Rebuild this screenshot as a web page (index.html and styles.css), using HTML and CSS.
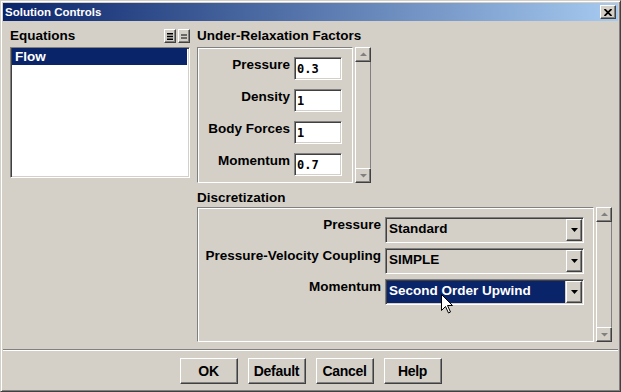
FILE: index.html
```html
<!DOCTYPE html>
<html lang="en">
<head>
  <meta charset="UTF-8">
  <title>Solution Controls</title>
  <link rel="stylesheet" href="styles.css">
</head>
<body>

  <div class="window">
    <div class="titlebar">
      <span class="title">Solution Controls</span>
      <div class="close-btn">
        <svg width="8" height="7" viewBox="0 0 8 7">
          <path d="M0.5 0 L7.5 7 M7.5 0 L0.5 7" stroke="#000" stroke-width="1.8" fill="none"/>
        </svg>
      </div>
    </div>

    <div class="main">
      <div class="group">
        <div class="group-head">
          <span class="group-label">Equations</span>
          <div class="mini-btns">
            <div class="mini-btn">
              <svg width="6" height="7" viewBox="0 0 6 7">
                <rect x="0" y="0" width="6" height="1.5" fill="#000"/>
                <rect x="0" y="2.75" width="6" height="1.5" fill="#000"/>
                <rect x="0" y="5.5" width="6" height="1.5" fill="#000"/>
              </svg>
            </div>
            <div class="mini-btn">
              <svg width="6" height="7" viewBox="0 0 6 7">
                <rect x="0" y="1.5" width="6" height="1" fill="#000"/>
                <rect x="0" y="4.5" width="6" height="1" fill="#000"/>
              </svg>
            </div>
          </div>
        </div>
        <ul class="listbox">
          <li class="selected">Flow</li>
        </ul>
      </div>

      <div class="group">
        <div class="group-head">
          <span class="group-label">Under-Relaxation Factors</span>
        </div>
        <div class="panel-row">
          <div class="panel relax">
            <div class="field-row"><label>Pressure</label><input type="text" value="0.3"></div>
            <div class="field-row"><label>Density</label><input type="text" value="1"></div>
            <div class="field-row"><label>Body Forces</label><input type="text" value="1"></div>
            <div class="field-row"><label>Momentum</label><input type="text" value="0.7"></div>
          </div>
          <div class="scrollbar">
            <div class="sb-btn">
              <svg width="7" height="5" viewBox="0 0 7 5"><polygon points="0,4 3.5,0.5 7,4" fill="#808080"/></svg>
            </div>
            <div class="sb-track"></div>
            <div class="sb-btn">
              <svg width="7" height="5" viewBox="0 0 7 5"><polygon points="0,1 3.5,4.5 7,1" fill="#808080"/></svg>
            </div>
          </div>
        </div>
      </div>

      <div class="group discret">
        <div class="group-head short">
          <span class="group-label">Discretization</span>
        </div>
        <div class="panel-row">
          <div class="panel schemes">
            <div class="field-row">
              <label>Pressure</label>
              <div class="select">
                <span class="value">Standard</span>
                <span class="arrow-btn"><svg width="7" height="4" viewBox="0 0 7 4"><polygon points="0,0 7,0 3.5,4" fill="#000"/></svg></span>
              </div>
            </div>
            <div class="field-row">
              <label>Pressure-Velocity Coupling</label>
              <div class="select">
                <span class="value">SIMPLE</span>
                <span class="arrow-btn"><svg width="7" height="4" viewBox="0 0 7 4"><polygon points="0,0 7,0 3.5,4" fill="#000"/></svg></span>
              </div>
            </div>
            <div class="field-row">
              <label>Momentum</label>
              <div class="select active">
                <span class="value">Second Order Upwind</span>
                <span class="arrow-btn"><svg width="7" height="4" viewBox="0 0 7 4"><polygon points="0,0 7,0 3.5,4" fill="#000"/></svg></span>
              </div>
            </div>
          </div>
          <div class="scrollbar">
            <div class="sb-btn">
              <svg width="7" height="5" viewBox="0 0 7 5"><polygon points="0,4 3.5,0.5 7,4" fill="#808080"/></svg>
            </div>
            <div class="sb-track"></div>
            <div class="sb-btn">
              <svg width="7" height="5" viewBox="0 0 7 5"><polygon points="0,1 3.5,4.5 7,1" fill="#808080"/></svg>
            </div>
          </div>
        </div>
      </div>
    </div>

    <div class="separator"></div>

    <div class="buttons">
      <button>OK</button>
      <button>Default</button>
      <button>Cancel</button>
      <button>Help</button>
    </div>

    <svg class="cursor" width="12" height="20" viewBox="0 0 12 20">
      <path d="M0.5 0.5 V16.5 L4.5 12.5 L7.5 19 L9.5 18 L6.5 11.5 H11.5 Z" fill="#fff" stroke="#000" stroke-width="1"/>
    </svg>
  </div>

</body>
</html>
```

FILE: styles.css
```css
* {
  box-sizing: border-box;
}

body {
  margin: 0;
  background: #d4d0c8;
  font-family: 'Liberation Sans', Arial, sans-serif;
  font-size: 13.5px;
  font-weight: bold;
  color: #000;
}

.window {
  position: relative;
  width: 621px;
  height: 392px;
  background: #d4d0c8;
  border: 1px solid;
  border-color: #d4d0c8 #404040 #404040 #d4d0c8;
  box-shadow: inset 1px 1px 0 #fff, inset -1px -1px 0 #808080;
  padding: 2px;
}

/* title bar */

.titlebar {
  height: 18px;
  display: flex;
  align-items: center;
  justify-content: space-between;
  padding: 0 2px;
  background: linear-gradient(to right, #0a246a, #a6caf0);
}

.title {
  color: #fff;
  font-size: 11.5px;
}

.close-btn,
.mini-btn,
.sb-btn,
.arrow-btn,
button {
  background: #d4d0c8;
  border: 1px solid;
  border-color: #fff #404040 #404040 #fff;
  box-shadow: inset -1px -1px 0 #808080;
}

.close-btn {
  width: 16px;
  height: 14px;
  display: flex;
  align-items: center;
  justify-content: center;
}

/* layout */

.main {
  display: grid;
  grid-template-columns: 180px 1fr;
  column-gap: 7px;
  padding: 5px 6px 0 7px;
}

.group-head {
  height: 21px;
  line-height: 20px;
  display: flex;
  justify-content: space-between;
  align-items: flex-start;
}

.group-head.short {
  height: 19px;
}

.discret {
  grid-column: 2;
  margin-top: 5px;
}

.mini-btns {
  display: flex;
  gap: 2px;
  margin-top: 3px;
}

.mini-btn {
  width: 12px;
  height: 14px;
  display: flex;
  align-items: center;
  justify-content: center;
}

/* equations list */

.listbox {
  list-style: none;
  margin: 0;
  height: 131px;
  background: #fff;
  border: 1px solid;
  border-color: #808080 #fff #fff #808080;
  box-shadow: inset 1px 1px 0 #404040, inset -1px -1px 0 #d4d0c8;
  padding: 0 2px 1px 1px;
}

.listbox li {
  height: 17px;
  line-height: 17px;
  padding-left: 3px;
}

.listbox li.selected {
  background: #0a246a;
  color: #fff;
}

/* panels */

.panel-row {
  display: flex;
}

.panel {
  border: 1px solid;
  border-color: #808080 #fff #fff #808080;
  box-shadow: inset 1px 1px 0 #fff;
  display: flex;
  flex-direction: column;
}

.relax {
  width: 156px;
  padding: 9px 10px 6px 0;
  gap: 9px;
}

.schemes {
  width: 397px;
  height: 135px;
  padding: 9px 9px 0 0;
  gap: 5px;
}

.field-row {
  display: flex;
  justify-content: flex-end;
  align-items: flex-start;
  gap: 4px;
}

.field-row label {
  line-height: 15px;
}

.field-row input {
  width: 48px;
  height: 23px;
  margin: 0;
  padding: 0 2px;
  background: #fff;
  border: 1px solid;
  border-color: #808080 #fff #fff #808080;
  box-shadow: inset 1px 1px 0 #404040, inset -1px -1px 0 #d4d0c8;
  font-family: 'DejaVu Sans Mono', 'Liberation Mono', monospace;
  font-size: 12px;
  font-weight: bold;
  outline: none;
}

.select {
  width: 199px;
  height: 26px;
  display: flex;
  padding: 1px;
  border: 1px solid;
  border-color: #808080 #fff #fff #808080;
  box-shadow: inset 1px 1px 0 #404040, inset -1px -1px 0 #d4d0c8;
}

.select .value {
  flex: 1;
  line-height: 20px;
  padding-left: 2px;
  margin-right: 1px;
}

.select.active .value {
  background: #0a246a;
  color: #fff;
}

.arrow-btn {
  width: 16px;
  display: flex;
  align-items: center;
  justify-content: center;
}

/* scrollbars */

.scrollbar {
  width: 16px;
  margin-left: 2px;
  display: flex;
  flex-direction: column;
}

.sb-btn {
  height: 15px;
  display: flex;
  align-items: center;
  justify-content: center;
}

.sb-track {
  flex: 1;
  border-left: 1px solid #fff;
  border-right: 1px solid #808080;
}

/* bottom */

.separator {
  margin-top: 7px;
  border-top: 1px solid #808080;
  border-bottom: 1px solid #fff;
}

.buttons {
  display: flex;
  justify-content: center;
  gap: 10px;
  margin-top: 7px;
}

button {
  width: 58px;
  height: 26px;
  padding: 0;
  font-family: 'Liberation Sans', Arial, sans-serif;
  font-size: 14px;
  font-weight: bold;
  letter-spacing: -0.3px;
  color: #000;
}

.cursor {
  position: absolute;
  left: 440px;
  top: 293px;
}
```
